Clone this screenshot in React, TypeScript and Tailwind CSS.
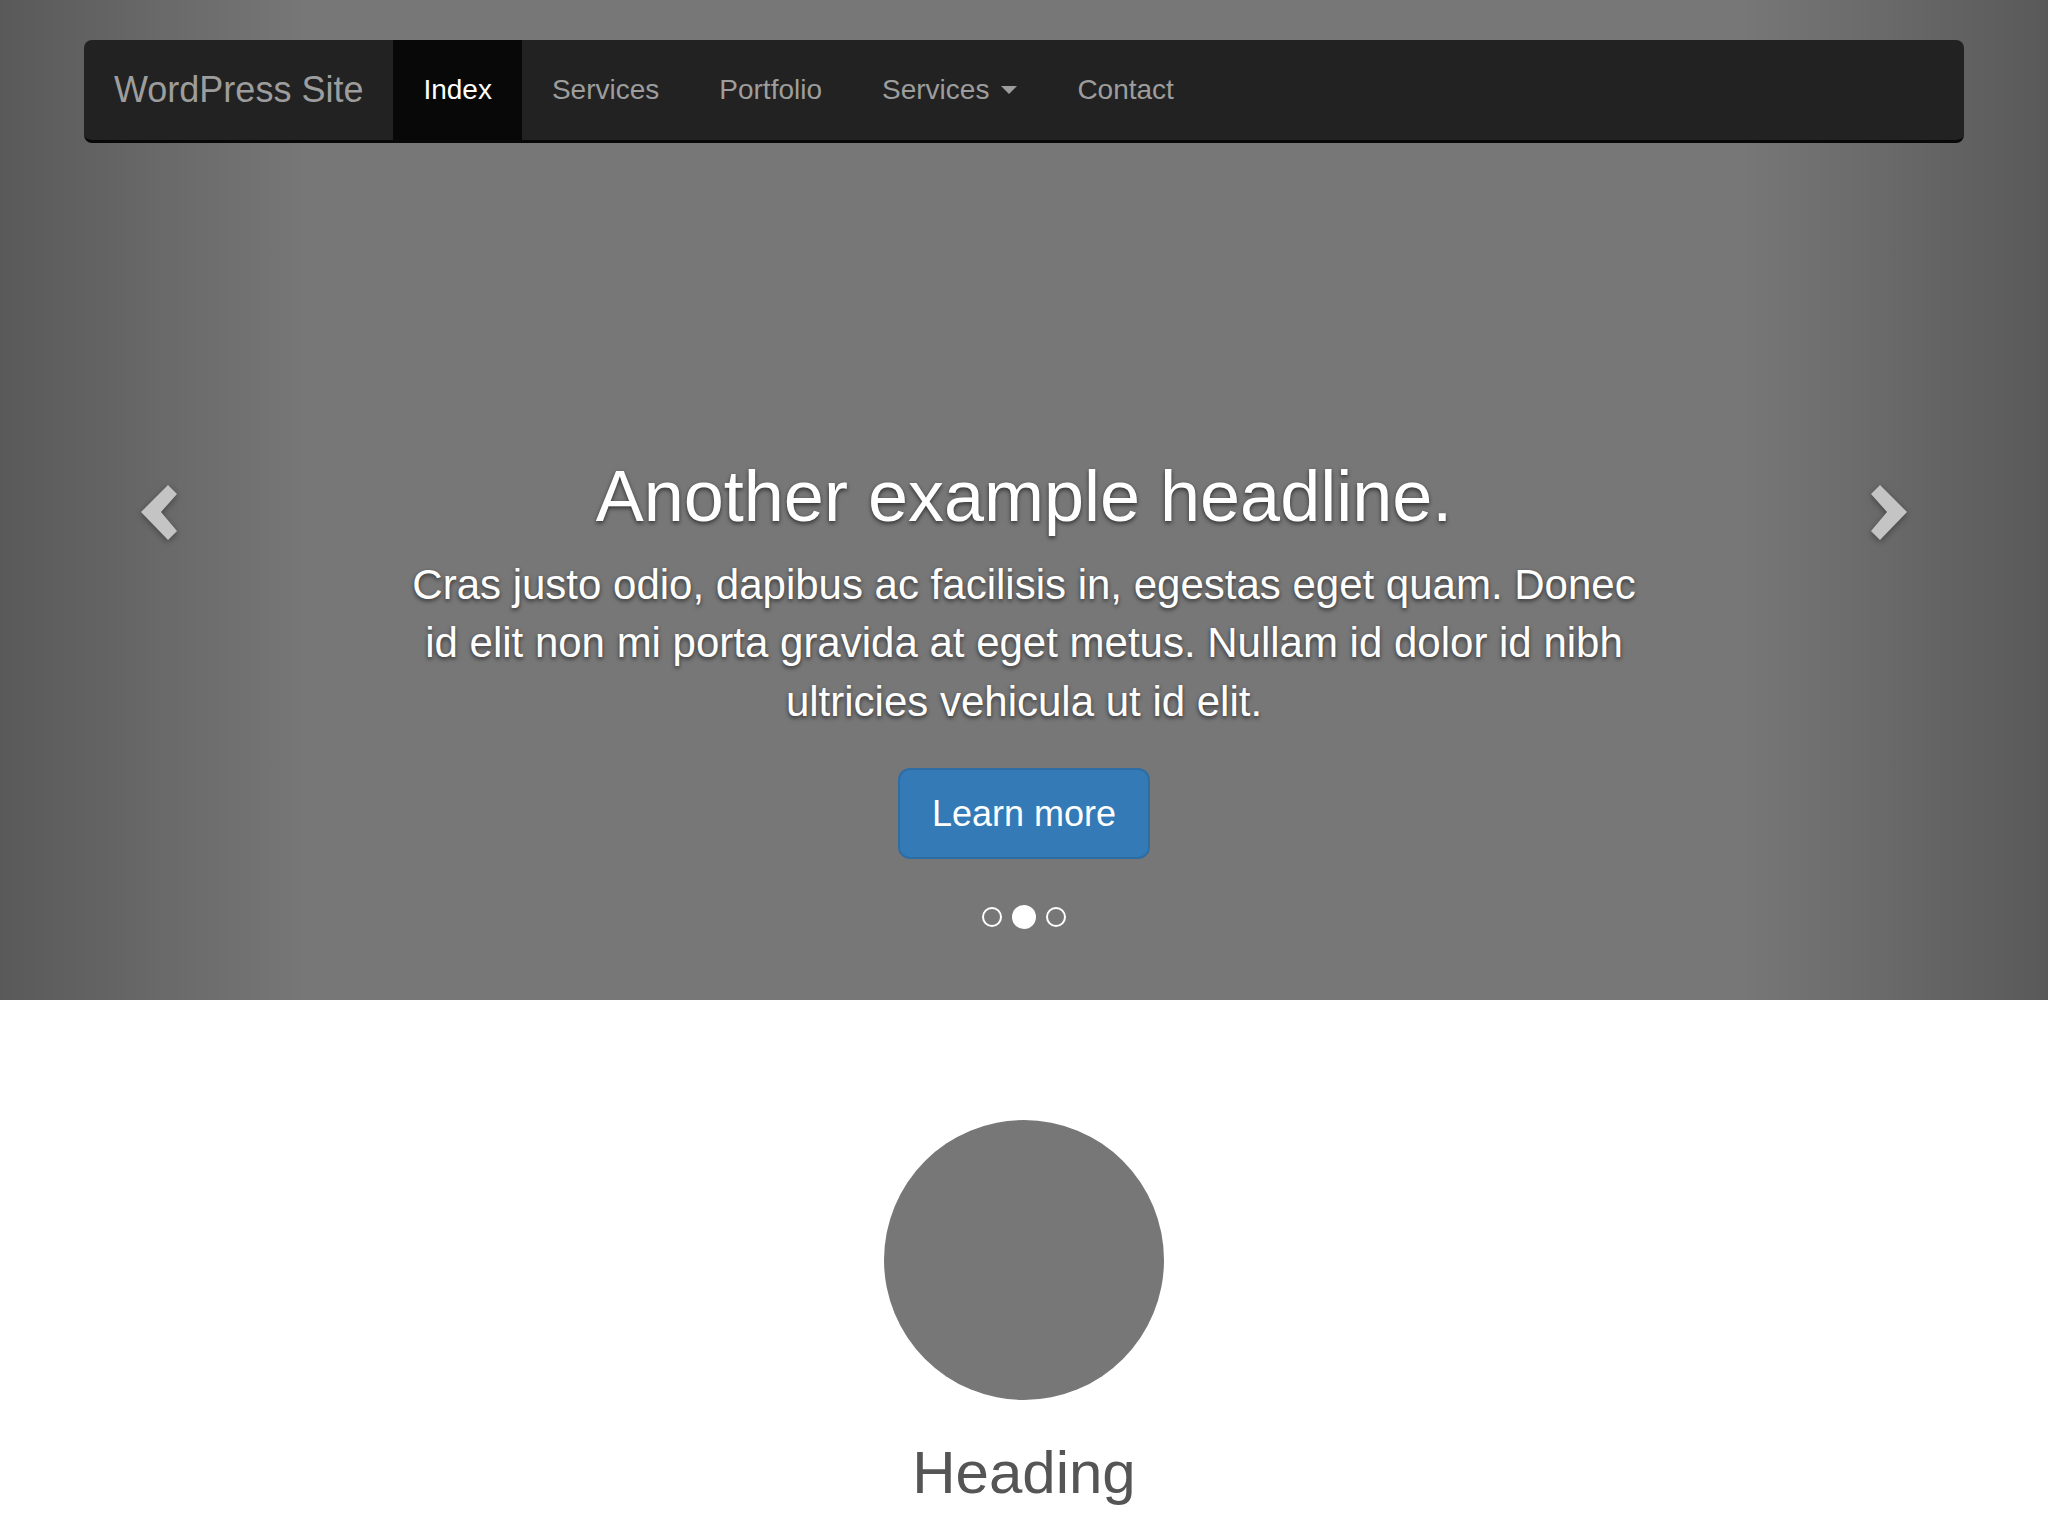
const navLinks = ['Services', 'Portfolio']

function Chevron({ dir }: { dir: 'left' | 'right' }) {
    const points = dir === 'left'
        ? '1,28 28,1 37,10 21,28 37,47 28,56'
        : '37,28 10,1 1,10 17,28 1,47 10,56'
    return (
        <svg width="38" height="57" viewBox="0 0 38 57" className="drop-shadow-[0_2px_3px_rgba(0,0,0,0.35)]">
            <polygon points={points} fill="#c4c4c4" />
        </svg>
    )
}

function Navbar() {
    return (
        <nav className="relative z-10 mx-[84px] flex h-[103px] items-stretch overflow-hidden rounded-lg border-b-[3px] border-[#080808] bg-[#222222]">
            <a className="flex items-center px-[30px] text-[36px] text-[#9d9d9d]">WordPress Site</a>
            <a className="flex items-center bg-[#080808] px-[30px] text-[28px] text-white">Index</a>
            {navLinks.map((l) => (
                <a key={l} className="flex items-center px-[30px] text-[28px] text-[#9d9d9d]">
                    {l}
                </a>
            ))}
            <a className="flex items-center px-[30px] text-[28px] text-[#9d9d9d]">
                Services
                <span className="ml-[12px] h-0 w-0 border-x-[8px] border-t-[8px] border-x-transparent border-t-[#9d9d9d]" />
            </a>
            <a className="flex items-center px-[30px] text-[28px] text-[#9d9d9d]">Contact</a>
        </nav>
    )
}

function Carousel() {
    return (
        <section className="relative flex h-[1000px] flex-col bg-[#777777] pt-[40px]">
            {/* side controls, drawn over the slide */}
            <div className="absolute inset-y-0 left-0 flex w-[15%] items-center bg-[linear-gradient(to_right,rgba(0,0,0,0.25),rgba(0,0,0,0))] pl-[140px] pt-[24px]">
                <Chevron dir="left" />
            </div>
            <div className="absolute inset-y-0 right-0 flex w-[15%] items-center justify-end bg-[linear-gradient(to_left,rgba(0,0,0,0.25),rgba(0,0,0,0))] pr-[140px] pt-[24px]">
                <Chevron dir="right" />
            </div>

            <Navbar />

            <div className="relative mx-auto mt-auto flex w-[1240px] flex-col items-center pb-[71px] text-center text-white [text-shadow:0_2px_4px_rgba(0,0,0,0.6)]">
                <h1 className="text-[72px] leading-[79px]">Another example headline.</h1>
                <p className="mt-[20px] text-[42px] leading-[58.8px]">
                    Cras justo odio, dapibus ac facilisis in, egestas eget quam. Donec id elit non mi porta gravida at eget metus. Nullam id dolor id nibh ultricies vehicula ut id elit.
                </p>
                <button className="mt-[36px] rounded-[12px] border-2 border-[#2e6da4] bg-[#337ab7] px-[32px] py-[20px] text-[36px] leading-[47px] text-white [text-shadow:none]">
                    Learn more
                </button>
                <div className="mt-[46px] flex items-center gap-[10px]">
                    <span className="h-[20px] w-[20px] rounded-full border-2 border-white" />
                    <span className="h-[24px] w-[24px] rounded-full bg-white" />
                    <span className="h-[20px] w-[20px] rounded-full border-2 border-white" />
                </div>
            </div>
        </section>
    )
}

export default function App() {
    return (
        <div className="min-h-screen bg-white font-['Liberation_Sans',Arial,sans-serif]">
            <Carousel />
            <div className="flex flex-col items-center pt-[120px] text-center">
                <div className="h-[280px] w-[280px] rounded-full bg-[#777777]" />
                <h2 className="mt-[40px] text-[60px] leading-[66px] text-[#555555]">Heading</h2>
            </div>
        </div>
    )
}
